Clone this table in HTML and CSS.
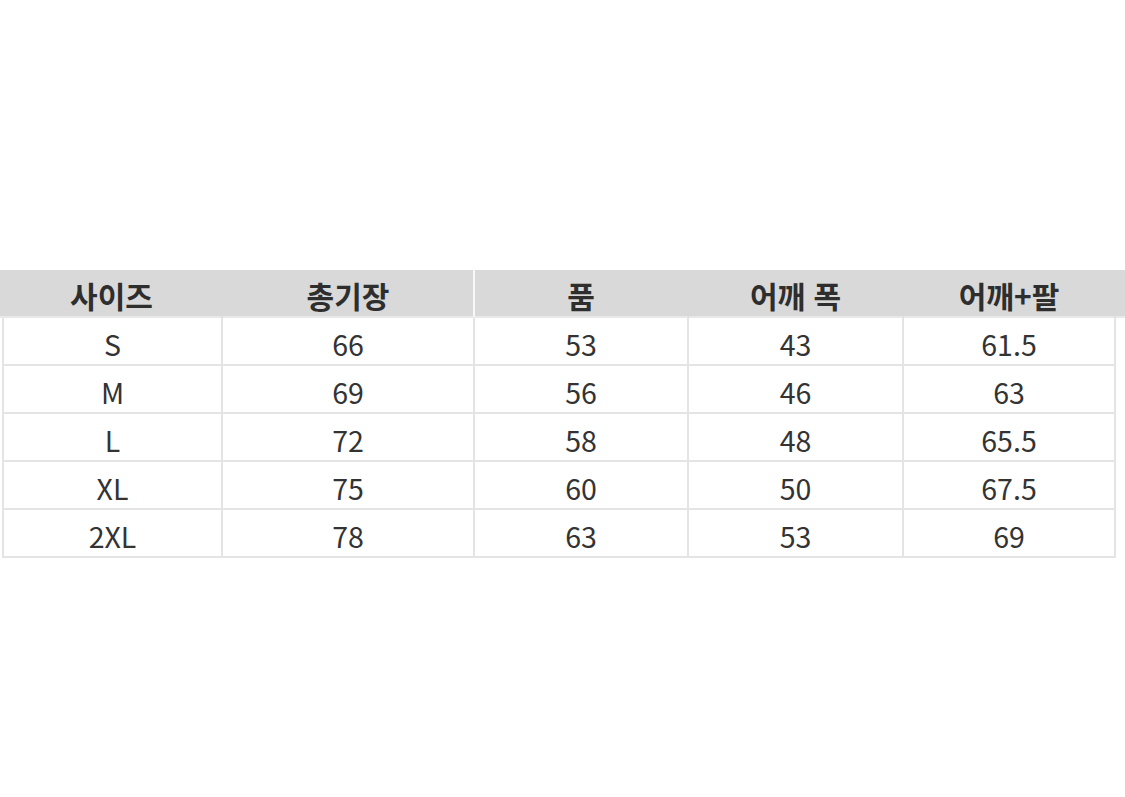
FILE: index.html
```html
<!DOCTYPE html>
<html lang="ko">
<head>
<meta charset="utf-8">
<title>사이즈 표</title>
<link rel="stylesheet" href="styles.css">
</head>
<body>
<main class="page">
  <div class="sheet">
    <div class="cell head">사이즈</div>
    <div class="cell head split">총기장</div>
    <div class="cell head">품</div>
    <div class="cell head">어깨 폭</div>
    <div class="cell head">어깨+팔</div>
    <div class="cell head tail"></div>

    <div class="cell first">S</div><div class="cell">66</div><div class="cell">53</div><div class="cell">43</div><div class="cell">61.5</div><div class="pad"></div>
    <div class="cell first">M</div><div class="cell">69</div><div class="cell">56</div><div class="cell">46</div><div class="cell">63</div><div class="pad"></div>
    <div class="cell first">L</div><div class="cell">72</div><div class="cell">58</div><div class="cell">48</div><div class="cell">65.5</div><div class="pad"></div>
    <div class="cell first">XL</div><div class="cell">75</div><div class="cell">60</div><div class="cell">50</div><div class="cell">67.5</div><div class="pad"></div>
    <div class="cell first">2XL</div><div class="cell">78</div><div class="cell">63</div><div class="cell">53</div><div class="cell">69</div><div class="pad"></div>
  </div>
</main>
</body>
</html>
```

FILE: styles.css
```css
html, body {
  margin: 0;
  padding: 0;
  background: #ffffff;
}

.page {
  padding-top: 270px;
  font-family: "Noto Sans CJK KR", "Noto Sans", sans-serif;
  color: #333333;
}

.sheet {
  display: grid;
  grid-template-columns: 223px 252px 214px 215px 212px 9px;
  grid-auto-rows: 48px;
  width: 1125px;
}

.cell {
  box-sizing: border-box;
  display: flex;
  align-items: center;
  justify-content: center;
  font-size: 28.5px;
  line-height: 1;
  padding-top: 6px;
  border-right: 2px solid #e4e4e4;
  border-bottom: 2px solid #e4e4e4;
}

.first {
  margin-left: 2px;
  border-left: 2px solid #e4e4e4;
}

.pad {
  background: transparent;
}

.head {
  background: #d9d9d9;
  font-weight: 700;
  font-size: 30px;
  color: #2e2e2e;
  padding-top: 4px;
  border-right-color: #d9d9d9;
  border-bottom-color: #e8e8e8;
}

.head:first-child {
  padding-left: 2px;
}

.head.split {
  border-right-color: #f8f8f8;
}

.head.tail {
  border-right: 0;
}
```
